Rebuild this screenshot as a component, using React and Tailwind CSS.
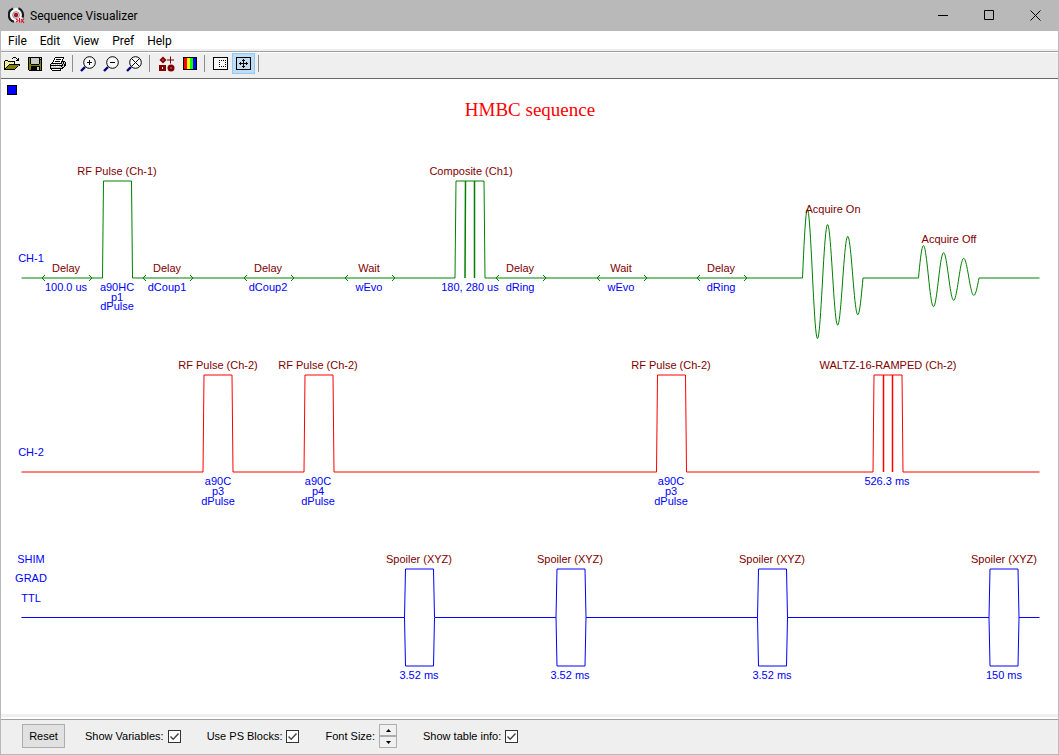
import React from "react";

const PALETTE = {
  k: "#000000",
  y: "#f4e850",
  w: "#ffffff",
  o: "#808000",
  g: "#c8c8c8",
};

const FOLDER = [
  ".........kkk....",
  "........k...k.k.",
  ".............kk.",
  ".kkk........kkk.",
  "kywykkkkkkk.....",
  "kwywywywywk.....",
  "kywywywywyk.....",
  "kwywykkkkkkkkkkk",
  "kywykooooooooook",
  "kwykoooooooook..",
  "kykoooooooook...",
  "kkoooooooook....",
  "kkkkkkkkkkk.....",
];

const DISK = [
  "kkkkkkkkkkkkkk",
  "kokggggggggkgk",
  "kokggggggggkkk",
  "kokggggggggkok",
  "kokggggggggkok",
  "kokggggggggkok",
  "kokggggggggkok",
  "kookkkkkkkkook",
  "kooooooooooook",
  "kookkkkkkkkkok",
  "kookkkkkkggkok",
  "kookkkkkkggkok",
  "kookkkkkkggkok",
  ".kkkkkkkkkkkkk",
];

const PRINTER = [
  ".....kkkkkkkkk..",
  "....kwwwwwwwwk..",
  "....kwkkkkkwk...",
  "...kwwwwwwwwk...",
  "...kwkkkkkwkkkk.",
  "..kwwwwwwwwkgkgk",
  ".kkkkkkkkkkkgkgk",
  "kgwgwgwgwgwgkgkk",
  "kkkkkkkkkkkkkgkk",
  "kgwgwgwwwggkggk.",
  "kgggggggggggkk..",
  "kkkkkkkkkkkkk...",
  ".kwwwwwwwwk.....",
  "..kkkkkkkkk.....",
];

function PixelIcon({ rows, width = 16 }) {
  return (
    <svg width={width} height={rows.length} viewBox={`0 0 ${width} ${rows.length}`} shapeRendering="crispEdges" aria-hidden="true">
      {rows.flatMap((row, y) =>
        [...row].map((c, x) => (PALETTE[c] ? <rect key={`${x}-${y}`} x={x} y={y} width="1" height="1" fill={PALETTE[c]} /> : null))
      )}
    </svg>
  );
}

function Magnifier({ children }) {
  return (
    <svg width="17" height="16" viewBox="0 0 17 16" fill="none" aria-hidden="true">
      <path d="M5 11 L1 15" stroke="#000080" strokeWidth="2.4" />
      <circle cx="9.5" cy="6.5" r="5.8" fill="#f8f8f8" stroke="#000" />
      <g stroke="#000" strokeWidth="1">{children}</g>
    </svg>
  );
}

function ShapesIcon() {
  return (
    <svg width="16" height="16" viewBox="0 0 16 16" aria-hidden="true">
      <g fill="#800000">
        <path d="M4 0.5 L7.5 4 L4 7.5 L0.5 4 Z" />
        <path d="M11 0.5h1v3h3v1h-3v3h-1v-3h-3v-1h3z" />
        <path d="M0 9h7v6h-7z" />
        <circle cx="12" cy="12" r="3.5" />
      </g>
      <path d="M3.500 3.500h1v1h-1zM3 11h1v2h-1zM11.500 11.500h1v1h-1z" fill="#efefef" />
    </svg>
  );
}

function ColorsIcon() {
  return (
    <svg width="14" height="13" viewBox="0 0 14 13" shapeRendering="crispEdges" aria-hidden="true">
      <path d="M0 0h14v13H0z" fill="#000" />
      <path d="M1 1h3v11H1z" fill="#f00" />
      <path d="M4 1h3v11H4z" fill="#ff0" />
      <path d="M7 1h3v11H7z" fill="#0f0" />
      <path d="M10 1h3v11h-3z" fill="#00f" />
    </svg>
  );
}

function RegionIcon() {
  return (
    <svg width="15" height="13" viewBox="0 0 15 13" fill="none" stroke="#000" shapeRendering="crispEdges" aria-hidden="true">
      <path d="M.5.5h14v12H.5z" fill="#f8f8f8" />
      <path d="M6 3.5h7M6 9.5h7M6.5 3v7M12.5 3v7" strokeDasharray="1 1" />
    </svg>
  );
}

function MoveIcon() {
  return (
    <svg width="15" height="13" viewBox="0 0 15 13" fill="none" stroke="#000" shapeRendering="crispEdges" aria-hidden="true">
      <path d="M.5.5h14v12H.5zM7.5 2v9M3 6.5h9M6 3.5h3M6 9.5h3M4.5 5v3M10.5 5v3" />
    </svg>
  );
}

function AppIcon() {
  return (
    <svg width="17" height="17" viewBox="0 0 17 17" fill="none" aria-hidden="true">
      <circle cx="8" cy="8" r="7" fill="#f4f4f4" />
      <path d="M5 1.5 A7.1 7.1 0 0 0 6 14.800 M10.500 1.300 A7.1 7.1 0 0 1 14.500 10.500" stroke="#1a1a1a" strokeWidth="2.2" />
      <circle cx="8" cy="8" r="3.3" stroke="#888" strokeWidth="1" />
      <circle cx="8" cy="8" r="2.2" fill="#b01020" />
      <path d="M8 12l2 1.500-2 1.500M11.500 11v4.500M13 15.500l3-4M13 12l3 4" stroke="#e01020" strokeWidth="1.1" />
    </svg>
  );
}

function ToolButton({ label, active, children }) {
  return (
    <button
      type="button"
      aria-label={label}
      className={
        active
          ? "flex h-[21px] w-[23px] items-center justify-center border border-[#90c8f6] bg-[#c0dcf3]"
          : "flex h-[21px] w-[23px] items-center justify-center"
      }
    >
      {children}
    </button>
  );
}

function Separator() {
  return <div className="mt-0.5 mr-1 ml-[3px] h-[17px] w-px bg-[#8c8c8c]" />;
}

function Toolbar() {
  return (
    <div className="flex h-[25px] items-start bg-[#efefef]">
      <div className="-ml-px flex">
        <ToolButton label="Open"><PixelIcon rows={FOLDER} /></ToolButton>
        <ToolButton label="Save"><PixelIcon rows={DISK} width={14} /></ToolButton>
        <ToolButton label="Print"><PixelIcon rows={PRINTER} /></ToolButton>
      </div>
      <Separator />
      <ToolButton label="Zoom in"><Magnifier><path d="M7 6.500h5M9.500 4v5" /></Magnifier></ToolButton>
      <ToolButton label="Zoom out"><Magnifier><path d="M7 6.500h5" /></Magnifier></ToolButton>
      <ToolButton label="Reset zoom"><Magnifier><path d="M5.500 2.500l8 8M13.500 2.500l-8 8" /></Magnifier></ToolButton>
      <Separator />
      <div className="flex pl-px">
        <ToolButton label="Shapes"><ShapesIcon /></ToolButton>
        <ToolButton label="Colors"><ColorsIcon /></ToolButton>
      </div>
      <Separator />
      <ToolButton label="Select region"><RegionIcon /></ToolButton>
      <ToolButton label="Pan" active><MoveIcon /></ToolButton>
      <Separator />
    </div>
  );
}

const pulse = (x) => `L${x} B L${x + 1} T L${x + 29} T L${x + 30} B`;

function basePath(y, top, starts, end) {
  const body = starts.map((x) => pulse(x)).join(" ").replaceAll("B", y).replaceAll("T", top);
  return `M21.5 ${y} ${body} L${end} ${y}`;
}

function fid(x0, y0, amp) {
  const pts = [];
  for (let i = 0; i <= 120; i++) {
    const halves = (i / 120) * 6;
    const y = y0 - amp * Math.exp(-0.125 * halves) * Math.sin(Math.PI * halves);
    pts.push(`L${(x0 + (i / 120) * 60.5).toFixed(2)} ${y.toFixed(2)}`);
  }
  return pts.join(" ");
}

const EVENTS = [
  [66, "Delay", "100.0 us"],
  [167, "Delay", "dCoup1"],
  [268, "Delay", "dCoup2"],
  [369, "Wait", "wEvo"],
  [520, "Delay", "dRing"],
  [621, "Wait", "wEvo"],
  [721, "Delay", "dRing"],
];

const TITLES = [
  [117, 175, "RF Pulse (Ch-1)"],
  [471, 175, "Composite (Ch1)"],
  [833, 213, "Acquire On"],
  [949, 243, "Acquire Off"],
  [218, 369, "RF Pulse (Ch-2)"],
  [318, 369, "RF Pulse (Ch-2)"],
  [671, 369, "RF Pulse (Ch-2)"],
  [888, 369, "WALTZ-16-RAMPED (Ch-2)"],
  [419, 563, "Spoiler (XYZ)"],
  [570, 563, "Spoiler (XYZ)"],
  [772, 563, "Spoiler (XYZ)"],
  [1004, 563, "Spoiler (XYZ)"],
];

const VALUES = [
  [31, 262, "CH-1"],
  [31, 456, "CH-2"],
  [31, 563, "SHIM"],
  [31, 582, "GRAD"],
  [31, 602, "TTL"],
  [117, 291, "a90HC"],
  [117, 301, "p1"],
  [117, 310, "dPulse"],
  [470, 291, "180, 280 us"],
  [218, 485, "a90C"],
  [218, 495, "p3"],
  [218, 505, "dPulse"],
  [318, 485, "a90C"],
  [318, 495, "p4"],
  [318, 505, "dPulse"],
  [671, 485, "a90C"],
  [671, 495, "p3"],
  [671, 505, "dPulse"],
  [887, 485, "526.3 ms"],
  [419, 679, "3.52 ms"],
  [570, 679, "3.52 ms"],
  [772, 679, "3.52 ms"],
  [1004, 679, "150 ms"],
];

function SequenceChart() {
  const ch1 =
    basePath(278, 181, [102.5, 455], 802.5) + fid(802.5, 278, 73) + "L918.5 278" + fid(918.5, 278, 34.5) + "L1039.5 278";
  return (
    <svg viewBox="1 79 1057 635" className="block h-auto w-full font-['Liberation_Sans',Arial,sans-serif]" role="img" aria-label="HMBC sequence">
      <rect x="7.500" y="85.500" width="9" height="9" fill="#00f" stroke="#000" />
      <g fill="none" strokeWidth="1">
        <path d={ch1} stroke="#008000" />
        <path d="M465 278L465.500 181M474.500 181V278" stroke="#008000" strokeWidth="1.500" />
        {EVENTS.map(([x]) => (
          <path key={x} d={`M${x - 21} 275l-3 3l3 3M${x + 23} 275l3 3l-3 3`} stroke="#008000" />
        ))}
        <path d={basePath(472, 375, [203, 304, 656.5, 873], 1039.5)} stroke="#f00" />
        <path d="M883.500 375V472M892.500 375V472" stroke="#f00" strokeWidth="1.500" />
        <path d="M21.500 617.500H404.500M435 617.500H556M586 617.500H757.500M787.500 617.500H989M1019 617.500H1039.500" stroke="#00f" />
        {[404.5, 556, 757.5, 989].map((x) => (
          <path key={x} d={`M${x} 617.5L${x + 1} 569H${x + 29}L${x + 30} 617.5L${x + 29} 666H${x + 1}Z`} stroke="#00f" />
        ))}
      </g>
      <text x="530" y="116" textAnchor="middle" fill="#f00" className="font-['Liberation_Serif',serif] text-[19px]">HMBC sequence</text>
      <g textAnchor="middle" fill="#800000" className="text-[11px]">
        {TITLES.map(([x, y, t]) => <text key={`${x}-${y}`} x={x} y={y}>{t}</text>)}
        {EVENTS.map(([x, t]) => <text key={x} x={x} y="272">{t}</text>)}
      </g>
      <g textAnchor="middle" fill="#00f" className="text-[11px]">
        {VALUES.map(([x, y, t]) => <text key={`${x}-${y}`} x={x} y={y}>{t}</text>)}
        {EVENTS.map(([x, , t]) => <text key={x} x={x} y="291">{t}</text>)}
      </g>
    </svg>
  );
}

function CheckField({ label }) {
  return (
    <label className="flex items-center gap-1">
      {label}
      <span className="relative flex">
        <input type="checkbox" defaultChecked className="peer size-[13px] appearance-none border border-[#333] bg-white" />
        <svg viewBox="0 0 13 13" className="pointer-events-none absolute inset-0 hidden size-[13px] peer-checked:block" fill="none" aria-hidden="true">
          <path d="M2.500 6.500l2.700 2.700l5.300-5.700" stroke="#444" strokeWidth="1.400" />
        </svg>
      </span>
    </label>
  );
}

function BottomBar() {
  return (
    <div className="flex h-[35px] items-center border-t border-[#a0a0a0] bg-[#efefef] pb-0.5 pl-[21px] font-['Liberation_Sans',Arial,sans-serif] text-[11px]">
      <button type="button" className="h-6 w-[43px] border border-[#adadad] bg-[#e1e1e1]">Reset</button>
      <div className="ml-5 flex items-center gap-[26px]">
        <CheckField label="Show Variables:" />
        <CheckField label="Use PS Blocks:" />
        <div className="flex items-center gap-1">
          <span>Font Size:</span>
          <div className="flex flex-col">
            {["Increase font size", "Decrease font size"].map((name, i) => (
              <button key={name} type="button" aria-label={name} className="flex h-3 w-[18px] items-center justify-center border border-[#adadad] bg-[#f0f0f0]">
                <svg width="5" height="3" viewBox="0 0 5 3" aria-hidden="true"><path d={i ? "M0 0h5L2.500 3z" : "M0 3h5L2.500 0z"} /></svg>
              </button>
            ))}
          </div>
        </div>
        <CheckField label="Show table info:" />
      </div>
    </div>
  );
}

export default function App() {
  return (
    <div className="flex min-h-screen flex-col bg-white font-[Roboto,'Liberation_Sans',sans-serif] text-black">
      <header className="flex h-[31px] items-center bg-[#b9b9b9] pr-px pl-2">
        <AppIcon />
        <h1 className="ml-[5px] text-[12px]">Sequence Visualizer</h1>
        <div className="ml-auto flex h-full">
          <button type="button" aria-label="Minimize" className="flex w-[46px] items-center justify-center">
            <svg width="11" height="11" viewBox="0 0 11 11" stroke="#000" aria-hidden="true"><path d="M0 5.500h10" /></svg>
          </button>
          <button type="button" aria-label="Maximize" className="flex w-[46px] items-center justify-center">
            <svg width="11" height="11" viewBox="0 0 11 11" fill="none" stroke="#000" aria-hidden="true"><path d="M.5.5h9v9h-9z" /></svg>
          </button>
          <button type="button" aria-label="Close" className="flex w-[46px] items-center justify-center">
            <svg width="11" height="11" viewBox="0 0 11 11" stroke="#000" aria-hidden="true"><path d="M.5.500l10 10M10.500.500l-10 10" /></svg>
          </button>
        </div>
      </header>
      <div className="flex flex-1 flex-col border-x border-b border-[#b9b9b9]">
        <nav className="flex h-[18px] items-center gap-[13px] pt-0.5 pl-[7px] text-[12px]">
          {["File", "Edit", "View", "Pref", "Help"].map((m) => (
            <button key={m} type="button">{m}</button>
          ))}
        </nav>
        <div className="h-0.5 bg-[#efefef]" />
        <div className="border-y border-t-[#a0a0a0] border-b-white" />
        <Toolbar />
        <main className="flex-1 border-t border-[#696969]">
          <SequenceChart />
        </main>
        <div className="h-[5px] border-b-2 border-white bg-[#efefef]" />
        <BottomBar />
      </div>
    </div>
  );
}
